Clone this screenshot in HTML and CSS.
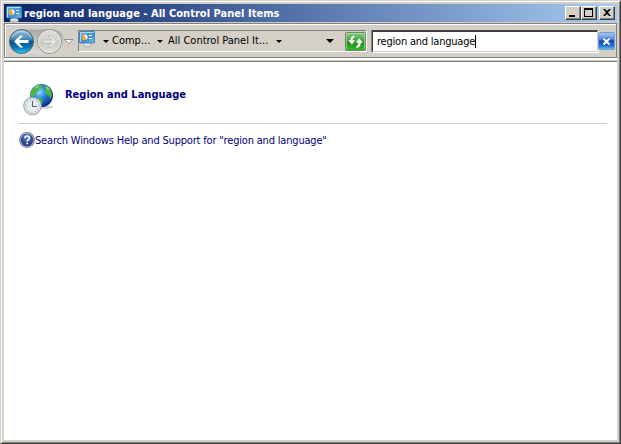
FILE: index.html
```html
<!DOCTYPE html>
<html lang="en">
<head>
<meta charset="utf-8">
<title>region and language - All Control Panel Items</title>
<link rel="stylesheet" href="styles.css">
</head>
<body>
<svg width="0" height="0" class="defs">
  <defs>
    <linearGradient id="screen" x1="0" y1="0" x2="1" y2="1"><stop offset="0" stop-color="#6cb6ec"/><stop offset=".6" stop-color="#3b8fd4"/><stop offset="1" stop-color="#6fc6ee"/></linearGradient>
    <linearGradient id="back" x1="0" y1="0" x2="0" y2="1"><stop offset="0" stop-color="#a6c7dd"/><stop offset=".42" stop-color="#3f86b4"/><stop offset=".5" stop-color="#07548a"/><stop offset=".75" stop-color="#0877b0"/><stop offset="1" stop-color="#32cdf2"/></linearGradient>
    <linearGradient id="fwd" x1="0" y1="0" x2="0" y2="1"><stop offset="0" stop-color="#dedddb"/><stop offset=".48" stop-color="#d5d4d0"/><stop offset=".52" stop-color="#c8c7c3"/><stop offset="1" stop-color="#e3e2de"/></linearGradient>
    <linearGradient id="tray" x1="0" y1="0" x2="0" y2="1"><stop offset="0" stop-color="#aaa8a4"/><stop offset=".4" stop-color="#c2c0bb"/><stop offset="1" stop-color="#dddad4"/></linearGradient>
    <radialGradient id="ocean" cx=".4" cy=".35" r=".65"><stop offset="0" stop-color="#9bd9fa"/><stop offset=".45" stop-color="#2587dc"/><stop offset="1" stop-color="#0a2e90"/></radialGradient>
    <radialGradient id="help" cx=".5" cy=".3" r=".7"><stop offset="0" stop-color="#5d86d8"/><stop offset="1" stop-color="#17307f"/></radialGradient>
    <symbol id="panel" viewBox="0 0 16 17">
      <ellipse cx="8.200" cy="14.400" rx="4.300" ry="2.400" fill="#c0c2c2"/><path d="M6 12h4.600l1 2.500H5z" fill="#e6e7e7"/>
      <rect x=".5" y=".5" width="15" height="11.500" rx=".8" fill="url(#screen)" stroke="#3f84b6"/>
      <path d="M1.500 1.500h13M1.500 1.500v9.500" stroke="#a9dafa" fill="none"/>
      <circle cx="5.800" cy="6.200" r="2.800" fill="#f3f7f3"/><path d="M5.800 6.200V3.200a3 3 0 1 0 2.200 5z" fill="#efa632"/>
      <path d="M10 4.500h3M10 7.500h3" stroke="#fff" stroke-width="1.200"/>
    </symbol>
  </defs>
</svg>
<div class="window">
  <header class="title">
    <svg class="title-icon" width="16" height="17"><use href="#panel"/></svg>
    <h1>region and language - All Control Panel Items</h1>
    <div class="controls">
      <button aria-label="Minimize"><svg width="12" height="10"><path d="M2 7h6v2H2z"/></svg></button>
      <button aria-label="Maximize"><svg width="12" height="10"><path fill-rule="evenodd" d="M1 0h9v9H1zM2 2v6h7V2z"/></svg></button>
      <button class="close" aria-label="Close"><svg width="12" height="10"><path d="M2 1h2l2 2 2-2h2L7 4.500 10 8H8L6 6 4 8H2l3-3.500z"/></svg></button>
    </div>
  </header>
  <nav class="toolbar">
    <svg class="nav" width="70" height="30" viewBox="0 0 70 30">
      <path d="M17 2.500H46Q58 3 58 14T46 26.500H17z" fill="url(#tray)"/>
      <circle cx="15.500" cy="14.500" r="12" fill="url(#back)" stroke="#4d6a80"/>
      <path d="M6 10.500A10.500 10.500 0 0 1 25 10.500" fill="none" stroke="#d3e4ee" stroke-opacity=".75"/>
      <path d="M8 14.500l6-5.800h3.200l-4.200 4.400H22.500v2.900H13l4.200 4.400H14z" fill="#fff"/>
      <circle cx="43.500" cy="14.500" r="12" fill="url(#fwd)" stroke="#92918f"/>
      <circle cx="43.500" cy="14.500" r="11" fill="none" stroke="#e9e8e5"/>
      <path d="M51 14.500l-6-5.800h-3.200l4.200 4.400H36.500v2.900H46l-4.200 4.400H45z" fill="#e8e7e4" stroke="#b7b6b2" stroke-width=".8"/>
      <path d="M58.500 12.500h8.500l-4.200 4.300z" fill="#f7f6f4" stroke="#85837f" stroke-width=".9"/>
    </svg>
    <div class="address">
      <svg class="place" width="16" height="17"><use href="#panel"/></svg>
      <i class="arrow a1"></i><span class="crumb c1">Comp...</span>
      <i class="arrow a2"></i><span class="crumb c2">All Control Panel It...</span>
      <i class="arrow a3"></i><i class="arrow big"></i>
      <svg class="refresh" width="21" height="19" viewBox="0 0 21 19"><defs><linearGradient id="g" x1="0" y1="0" x2="0" y2="1"><stop offset="0" stop-color="#8fcf86"/><stop offset=".45" stop-color="#45a43c"/><stop offset=".5" stop-color="#158a10"/><stop offset="1" stop-color="#34bf2b"/></linearGradient></defs>
        <rect x=".5" y=".5" width="20" height="18" rx="1" fill="url(#g)" stroke="#71866d"/><path d="M1.500 17V1.500h18V17" fill="none" stroke="#b4dfad" stroke-opacity=".7"/>
        <path d="M10 3Q5 3.500 5 8H2.500L7 13 10.800 8H8Q7.800 5.800 10 5.500zM11 16.500Q16.200 15.500 16 11h2.500L14 5.800 10.300 11H13Q13.200 13.500 11 14z" fill="#eef6ec" stroke="#267820" stroke-width=".4"/></svg>
    </div>
    <div class="search"><span>region and language</span><i class="caret"></i></div>
    <svg class="clear" width="17" height="18" viewBox="0 0 17 18"><defs><linearGradient id="b" x1="0" y1="0" x2="0" y2="1"><stop offset="0" stop-color="#a9c5ee"/><stop offset=".4" stop-color="#5c8de0"/><stop offset=".48" stop-color="#174bc4"/><stop offset=".75" stop-color="#2467d6"/><stop offset="1" stop-color="#54cdf0"/></linearGradient></defs>
      <rect x=".5" y=".5" width="16" height="17" rx="1" fill="url(#b)" stroke="#7d9bc8"/><path d="M5.500 6.500l6 6M11.500 6.500l-6 6" stroke="#274d9d" stroke-width="3.400"/><path d="M5.500 6.500l6 6M11.500 6.500l-6 6" stroke="#fff" stroke-width="2"/></svg>
  </nav>
  <div class="divider"></div>
  <main>
    <a class="result">
      <svg width="34" height="34" viewBox="0 0 34 34">
        <ellipse cx="22" cy="24" rx="8" ry="1.800" fill="#777" opacity=".35"/>
        <circle cx="18.500" cy="12.500" r="11.500" fill="url(#ocean)"/>
        <path d="M8 9q2-5 7-7l5-.5-1 2.500-3 1 .5 2-3 2.500-2 3-3 1.500-1.500-2zM21 2l4 1.500 3 4 1 5-2 4-1-4-3-1-1-3 1-3zM12 15l4-.5 4 2.500-1 4-3 2.500-3-3z" fill="#4cb43d"/>
        <path d="M12 5l4-2M23 4l3 3" stroke="#a6df72" stroke-width="1.300"/>
        <circle cx="9.500" cy="23" r="8.800" fill="#dfe5e9" stroke="#959ea5"/>
        <circle cx="9.500" cy="23" r="7.300" fill="#e6ebee" stroke="#c3ccd2" stroke-width=".7"/>
        <circle cx="9.500" cy="23" r="6.200" fill="none" stroke="#87939b" stroke-width="1" stroke-dasharray=".8 2.446"/>
        <path d="M9.500 18v5.500H14" fill="none" stroke="#58656e" stroke-width="1.100"/>
      </svg>
      <b>Region and Language</b>
    </a>
    <a class="help">
      <svg width="16" height="16" viewBox="0 0 16 16"><circle cx="8" cy="8" r="7.900" fill="#777d86"/><circle cx="8" cy="8" r="6.900" fill="#b5bac3"/><circle cx="8" cy="8" r="6.200" fill="url(#help)"/><path d="M5.700 6.200Q5.800 4 8.100 4t2.300 1.900C10.400 7.600 8.200 7.600 8.200 9.500" fill="none" stroke="#fff" stroke-width="1.600"/><circle cx="8.200" cy="11.600" r="1" fill="#fff"/></svg>
      <span>Search Windows Help and Support for "region and language"</span>
    </a>
  </main>
</div>
</body>
</html>
```
FILE: styles.css
```css
* { box-sizing: border-box; }
body { margin: 0; overflow: hidden; font: 11px/14px "DejaVu Sans Condensed", "DejaVu Sans", sans-serif; font-stretch: condensed; color: #000; }
svg { display: block; flex: none; }
.defs { position: absolute; }
.window { width: 621px; height: 444px; padding: 3px 1px 1px 2px; display: flex; flex-direction: column; background: #d4d0c8; border: 1px solid #404040; border-top-color: #d4d0c8; border-left-color: #d4d0c8; box-shadow: inset 1px 1px #fff, inset -1px -1px #808080; }
.title { height: 18px; width: 613px; margin-left: 1px; display: flex; align-items: center; padding: 0 2px; background: linear-gradient(90deg, #0a246a, #a6caf0); flex: none; }
.title-icon { margin-top: 2px; }
h1 { margin: 1px 0 0 2px; font-size: 11px; line-height: 18px; font-weight: bold; color: #fff; white-space: nowrap; letter-spacing: .03px; }
.controls { display: flex; margin-left: auto; }
button { width: 16px; height: 14px; padding: 1px; border: 1px solid #404040; border-left-color: #fff; border-top-color: #fff; background: #d4d0c8; box-shadow: inset -1px -1px #808080; overflow: hidden; }
.close { margin-left: 2px; }
.toolbar { height: 35px; width: 613px; margin: 1px 0 0 1px; display: flex; align-items: flex-start; padding-top: 6px; border: 1px solid #808080; box-shadow: inset 1px 1px #fff, 0 1px #fff; flex: none; }
.nav { margin: -3px 0 0 1px; }
.address { width: 289px; height: 22px; margin-left: 2px; display: flex; align-items: center; border: 1px solid #808080; border-right-color: #fff; border-bottom-color: #fff; }
.place { margin: -3px 0 0; }
.arrow { width: 0; height: 0; border: 3px solid transparent; border-top-color: #000; border-bottom: 0; flex: none; }
.a1 { margin-left: 8px; }
.c1 { margin-left: 3px; width: 40px; }
.a2 { margin-left: 5px; }
.c2 { margin-left: 5px; width: 102px; }
.a3 { margin-left: 6px; }
.big { margin-left: 44px; border-width: 4px 4px 0; }
.crumb { white-space: nowrap; }
.refresh { margin: 0 0 0 auto; }
.search { width: 226px; height: 22px; margin-left: 5px; display: flex; align-items: center; padding-left: 4px; background: #fff; border: 1px solid #d4d0c8; border-top: 2px solid #404040; border-left: 1px solid #404040; box-shadow: 1px 1px #fff, -1px 0 #808080; white-space: nowrap; letter-spacing: -.22px; }
.caret { width: 1px; height: 13px; background: #000; }
.clear { margin: 2px 0 0; }
.divider { height: 4px; width: 613px; margin-left: 1px; background: linear-gradient(#fff 0 2px, #d4d0c8 2px 3px, #808080 3px); flex: none; }
main { width: 613px; height: 378px; margin-left: 1px; padding: 21px 10px 0 15px; background: #fff; color: #000080; flex: none; }
.result { height: 41px; display: flex; align-items: flex-start; padding-left: 4px; border-bottom: 1px solid #ccccc0; }
.result b { margin: 5px 0 0 8px; }
.help { height: 16px; margin-top: 8px; display: flex; align-items: center; white-space: nowrap; letter-spacing: -.185px; }
.help span { margin-top: 1px; }
```
